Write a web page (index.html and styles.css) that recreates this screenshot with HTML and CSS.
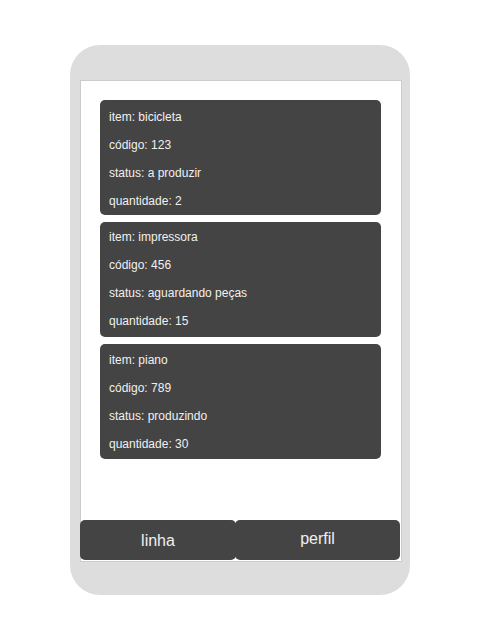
FILE: index.html
```html
<!DOCTYPE html>
<html lang="pt">
<head>
<meta charset="utf-8">
<title>Pedidos</title>
<link rel="stylesheet" href="styles.css">
</head>
<body>
<div class="phone">
  <div class="screen">
    <div class="list">
      <div class="card">
        <p class="line">item: bicicleta</p>
        <p class="line">código: 123</p>
        <p class="line">status: a produzir</p>
        <p class="line">quantidade: 2</p>
      </div>
      <div class="card">
        <p class="line">item: impressora</p>
        <p class="line">código: 456</p>
        <p class="line">status: aguardando peças</p>
        <p class="line">quantidade: 15</p>
      </div>
      <div class="card">
        <p class="line">item: piano</p>
        <p class="line">código: 789</p>
        <p class="line">status: produzindo</p>
        <p class="line">quantidade: 30</p>
      </div>
    </div>
    <div class="nav">
      <div class="btn btn-left">linha</div>
      <div class="btn btn-right">perfil</div>
    </div>
  </div>
</div>
</body>
</html>
```

FILE: styles.css
```css
html, body {
  margin: 0;
  padding: 0;
  background: #fff;
  font-family: "Liberation Sans", Arial, sans-serif;
}

.phone {
  width: 340px;
  height: 550px;
  margin: 45px auto 0;
  box-sizing: border-box;
  padding: 35px 8px 33px 10px;
  background: #dddddd;
  border-radius: 30px;
}

.screen {
  width: 322px;
  height: 482px;
  box-sizing: border-box;
  border: 1px solid #cccccc;
  background: #ffffff;
  display: flex;
  flex-direction: column;
}

.list {
  display: flex;
  flex-direction: column;
  gap: 7px;
  margin: 19px 20px 0 19px;
}

.card {
  background: #444444;
  border-radius: 5px;
  padding: 1px 9px 0;
  height: 115px;
  box-sizing: border-box;
  color: #f0f0f0;
}

.card:first-child {
  padding-top: 3px;
}

.card:nth-child(3) {
  padding-top: 2px;
}

.line {
  margin: 0;
  font-size: 12px;
  line-height: 28px;
  height: 28px;
}

.nav {
  margin-top: auto;
  margin-bottom: 1px;
  margin-left: -1px;
  display: flex;
  height: 40px;
}

.btn {
  background: #444444;
  color: #f0f0f0;
  border-radius: 5px;
  font-size: 16px;
  display: flex;
  align-items: center;
  justify-content: center;
  box-sizing: border-box;
  height: 40px;
}

.btn-left {
  flex: 0 0 156px;
  padding-top: 2px;
}

.btn-right {
  flex: 0 0 165px;
  margin-left: -1px;
  padding-bottom: 2px;
}
```
